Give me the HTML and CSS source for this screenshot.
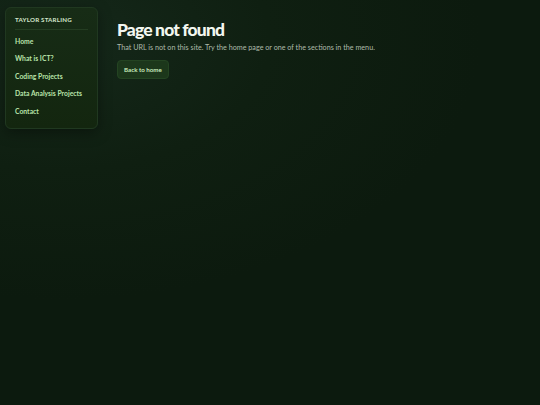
FILE: index.html
```html
<!DOCTYPE html>
<html lang="en">
<head>
<meta charset="utf-8">
<title>Page not found</title>
<link rel="stylesheet" href="styles.css">
</head>
<body>
<div class="layout">
  <nav class="sidebar">
    <div class="brand">TAYLOR STARLING</div>
    <ul class="menu">
      <li><a href="#">Home</a></li>
      <li><a href="#">What is ICT?</a></li>
      <li><a href="#">Coding Projects</a></li>
      <li><a href="#">Data Analysis Projects</a></li>
      <li><a href="#">Contact</a></li>
    </ul>
  </nav>
  <main class="content">
    <h1 class="title">Page not found</h1>
    <p class="lead">That URL is not on this site. Try the home page or one of the sections in the menu.</p>
    <a class="btn" href="#">Back to home</a>
  </main>
</div>
</body>
</html>
```
FILE: styles.css
```css
* { box-sizing: border-box; }
html, body { margin: 0; height: 100%; }
body {
  font-family: Lato, "Noto Sans", sans-serif;
  background: radial-gradient(ellipse 420px 260px at 60px 40px, #15281a 0%, #0f1f11 50%, #0c1a0e 100%);
  background-color: #0c1a0e;
  color: #e8f2e4;
}
.layout {
  display: flex;
  align-items: flex-start;
  gap: 19px;
  padding: 7px 5px;
}
.sidebar {
  width: 93px;
  flex: none;
  background: linear-gradient(180deg, #172c16 0%, #13260f 100%);
  border: 1px solid #203820;
  border-radius: 6px;
  padding: 8px 9px 8px;
  box-shadow: 0 4px 14px rgba(0,0,0,0.35);
}
.brand {
  font-size: 6.2px;
  font-weight: 700;
  letter-spacing: 0.2px;
  color: #d4e6cc;
  padding: 0 0 6px;
  border-bottom: 1px solid #243d22;
}
.menu {
  list-style: none;
  margin: 0;
  padding: 0;
}
.menu li {
  height: 17.5px;
  display: flex;
  align-items: center;
}
.menu li:first-child { margin-top: 2px; }
.menu a {
  font-size: 6.8px;
  font-weight: 700;
  color: #b9e3a9;
  text-decoration: none;
}
.content {
  padding-top: 13px;
  flex: 1;
}
.title {
  margin: 0;
  font-size: 17.5px;
  font-weight: 900;
  line-height: 20px;
  color: #f3f7f0;
  letter-spacing: -0.85px;
}
.lead {
  margin: 3px 0 0;
  font-size: 7.2px;
  color: #aebbaa;
  line-height: 10px;
}
.btn {
  display: inline-block;
  margin-top: 7px;
  background: #1c371b;
  border: 1px solid #244422;
  border-radius: 4px;
  padding: 5px 6px 4px;
  font-size: 6.2px;
  font-weight: 700;
  color: #c9ebbc;
  text-decoration: none;
  line-height: 8px;
}
```
